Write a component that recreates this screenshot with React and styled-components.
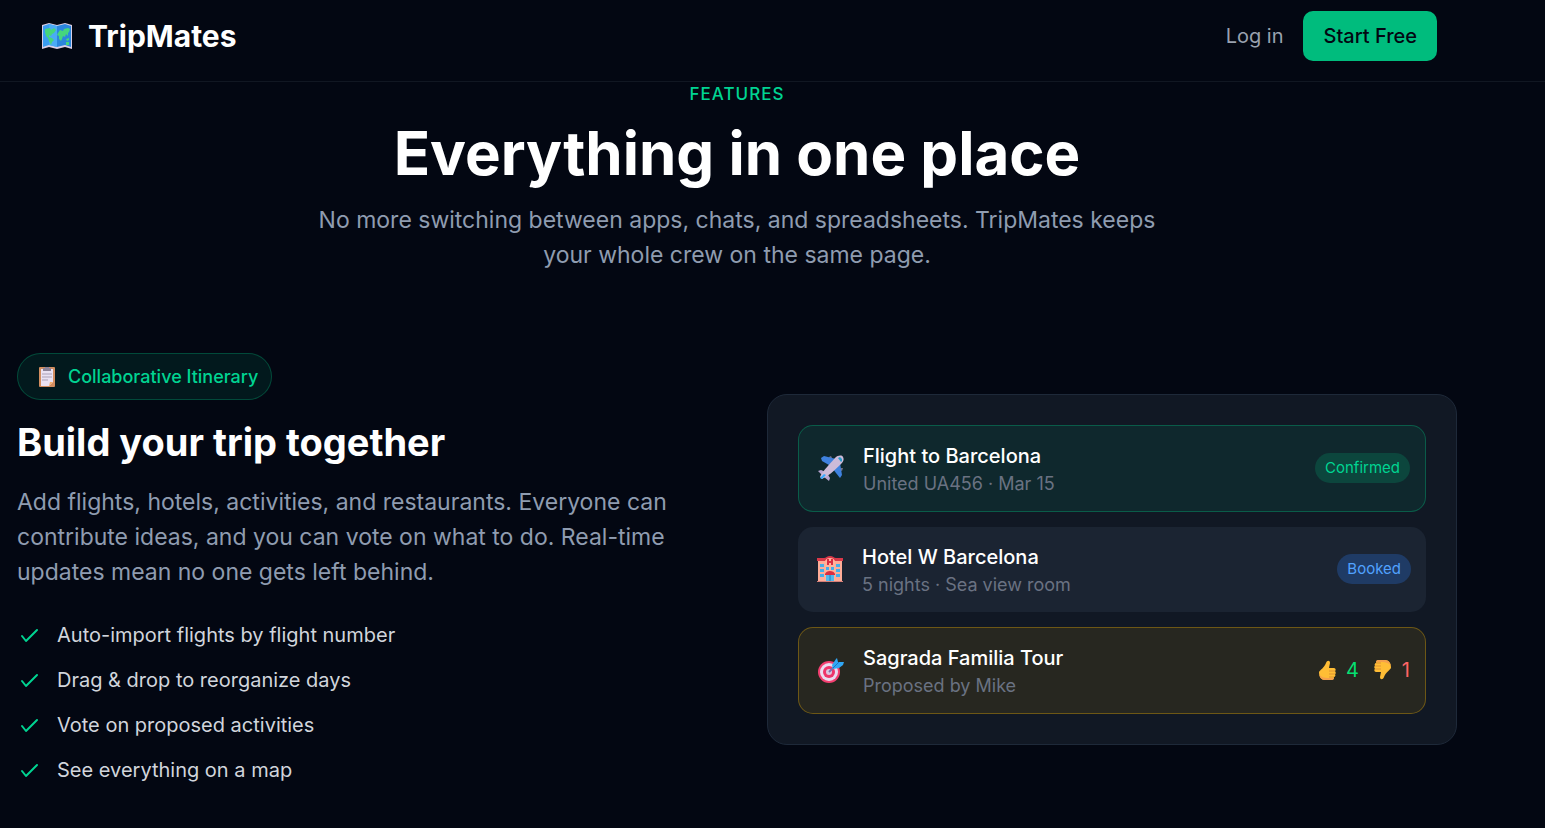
import React from "react";
import styled, { createGlobalStyle } from "styled-components";

const emerald = "#00bc7d";
const mint = "#00d492";
const muted = "#8f9cb0";

const features = [
  "Auto-import flights by flight number",
  "Drag & drop to reorganize days",
  "Vote on proposed activities",
  "See everything on a map",
];

const MapIcon = () => (
  <svg width="32" height="28" viewBox="0 0 32 28" aria-hidden="true">
    <path d="M1 3 8 1l8 2 8-2 7 2v24l-7-2-8 2-8-2-7 2z" fill="#d9cfe6" />
    <path d="m2 4 6-2 8 2v21l-8-2-6 2z" fill="#3a9df0" />
    <path d="m16 4 8-2 6 2v21l-6-2-8 2z" fill="#2b86dd" />
    <path d="m8 2 8 2v21l-8-2z" fill="#4aabf5" />
    <path
      d="M4 7l5-1 1 2 3-2 2 2-2 3-2 1-1 2-2-1v2l3 1 2 2-2 2-1 3-2-4-1-3-2-2-1-4zM17 11l2-3 3 1 1-2 4-1 2 1-1 3-1 1v3l-2-2-1 3-2-1-1 3-1 2-2-2v-3l-2-1z"
      fill="#45d67c"
    />
    <path d="M25 17l3-1v2l-2 1zM25 20h3v3h-3z" fill="#45d67c" />
  </svg>
);

const ClipboardIcon = () => (
  <svg width="18" height="22" viewBox="0 0 18 22" aria-hidden="true">
    <rect x="1" y="1" width="16" height="20" rx="1" fill="#d18d5f" />
    <path d="M3 3h12v13l-4 4H3z" fill="#e9e2f3" />
    <path d="m11 20 1-4h3z" fill="#f5b06d" />
    <path d="M5 2h2V1h4v1h2v3H5z" fill="#8b8296" />
    <path d="M4 8h10M4 11h10M4 14h6" stroke="#aaa1b7" />
  </svg>
);

const PlaneIcon = () => (
  <svg width="28" height="28" viewBox="0 0 28 28" aria-hidden="true">
    <path d="M12 3l2-1 1 2-2 2zM24 14l2 0-1 3-2-1z" fill="#77738a" />
    <path d="M4 4l3-2 12 3-7 6-7-4z" fill="#3f82df" />
    <path d="M23 9l2 12-2 3-4-5-3-4z" fill="#3f82df" />
    <path d="M1 17l3-1 5 2-4 3zM7 23l3-4 3 5-1 3z" fill="#b9a5d2" />
    <path
      d="M3 23c2-5 7-10 15-19 3-3 7-3 8-1s1 4-2 7C16 18 11 22 5 25z"
      fill="#cdbbd9"
    />
    <path d="M21 4l2-1 2 2v2l-1 1z" fill="#2a9bc9" />
    <path d="m3 24 4-4 2 1-4 4z" fill="#38a8ff" />
  </svg>
);

const HotelIcon = () => (
  <svg width="26" height="26" viewBox="0 0 26 26" aria-hidden="true">
    <path d="M1 4h24v21H1z" fill="#ffad98" />
    <path d="M8 4c1-4 9-4 10 0v21H8z" fill="#ffb49b" />
    <path
      d="M0 2h7c2 0 3-2 6-2s4 2 6 2h7v3h-8c-1-2-2-3-5-3S9 3 8 5H0z"
      fill="#da3849"
    />
    <path d="M11 3v6M15 3v6M11 6h4" stroke="#d92e43" strokeWidth="2" />
    <path
      d="M3 8h4v3H3zM3 13h4v3H3zM3 18h4v3H3zM19 8h4v3h-4zM19 13h4v3h-4zM19 18h4v3h-4zM9 11h3v3H9zM14 11h3v3h-3z"
      fill="#45aee9"
    />
    <path d="M8 18c1-4 9-4 10 0v1H8z" fill="#d92e43" />
    <path d="M9 19h8v6H9z" fill="#52b9ec" />
    <path d="M13 19v6" stroke="#2a79b8" />
    <path d="M0 25h26v1H0z" fill="#d68079" />
  </svg>
);

const TargetIcon = () => (
  <svg width="28" height="28" viewBox="0 0 28 28" aria-hidden="true">
    <circle cx="12" cy="16" r="11" fill="#f33f70" />
    <circle cx="12" cy="16" r="9" fill="#eadcf0" />
    <circle cx="12" cy="16" r="6" fill="#ee356a" />
    <circle cx="12" cy="16" r="3" fill="#dbc6df" />
    <path d="m12 16 6-6" stroke="#7c6fae" strokeWidth="2" />
    <path d="m15 9 4-6 1-1 1 4 6 0-1 3-4 3-6 1z" fill="#30a6f4" />
    <path d="m16 12 6-6" stroke="#1776c5" />
  </svg>
);

const ThumbIcon = ({ down }) => (
  <svg width="20" height="22" viewBox="0 0 20 22" aria-hidden="true">
    <g transform={down ? "rotate(180 10 11)" : undefined}>
      <path
        d="M2 13c1-2 5-4 7-9 1-3 4-3 4 0l-1 5h5c2 0 2 3 1 3 1 1 1 3 0 3 1 1 0 3-1 3 0 2-1 3-3 3H8c-4 0-6-3-6-8z"
        fill="#ffbd35"
      />
      <path d="M2 15c2 3 5 4 9 4h6c0 2-2 2-3 2H8c-3 0-5-2-6-6z" fill="#f5a04d" />
      <path d="M12 12h6M12 15h6M12 18h5" stroke="#df9335" />
    </g>
  </svg>
);

const CheckIcon = () => (
  <svg width="25" height="25" viewBox="0 0 25 25" fill="none" aria-hidden="true">
    <path
      d="m5 13 4 5L20 7"
      stroke={mint}
      strokeWidth="2"
      strokeLinecap="round"
      strokeLinejoin="round"
    />
  </svg>
);

const App = () => {
  return (
    <>
      <GlobalStyle />
      <Header>
        <HeaderInner>
          <Brand href="#">
            <MapIcon />
            TripMates
          </Brand>
          <Nav>
            <LoginLink href="#login">Log in</LoginLink>
            <StartButton type="button">Start Free</StartButton>
          </Nav>
        </HeaderInner>
      </Header>
      <Main>
        <Intro>
          <Eyebrow>FEATURES</Eyebrow>
          <Headline>Everything in one place</Headline>
          <Lead>
            No more switching between apps, chats, and spreadsheets. TripMates
            keeps your whole crew on the same page.
          </Lead>
        </Intro>
        <Feature>
          <div>
            <Tag>
              <TagIcon>
                <ClipboardIcon />
              </TagIcon>
              Collaborative Itinerary
            </Tag>
            <Title>Build your trip together</Title>
            <Copy>
              Add flights, hotels, activities, and restaurants. Everyone can
              contribute ideas, and you can vote on what to do. Real-time
              updates mean no one gets left behind.
            </Copy>
            <CheckList>
              {features.map((item) => (
                <li key={item}>
                  <CheckIcon />
                  {item}
                </li>
              ))}
            </CheckList>
          </div>
          <Card>
            <Row $bg="rgba(0, 188, 125, 0.1)" $border="rgba(0, 188, 125, 0.35)">
              <RowIcon>
                <PlaneIcon />
              </RowIcon>
              <RowText>
                <h4>Flight to Barcelona</h4>
                <p>United UA456 · Mar 15</p>
              </RowText>
              <Badge $color={mint} $bg="rgba(0, 188, 125, 0.2)">
                Confirmed
              </Badge>
            </Row>
            <Row $bg="#1b2432">
              <RowIcon>
                <HotelIcon />
              </RowIcon>
              <RowText>
                <h4>Hotel W Barcelona</h4>
                <p>5 nights · Sea view room</p>
              </RowText>
              <Badge $color="#51a2ff" $bg="rgba(43, 127, 255, 0.25)">
                Booked
              </Badge>
            </Row>
            <Row $bg="rgba(240, 177, 0, 0.1)" $border="rgba(240, 177, 0, 0.35)">
              <RowIcon>
                <TargetIcon />
              </RowIcon>
              <RowText>
                <h4>Sagrada Familia Tour</h4>
                <p>Proposed by Mike</p>
              </RowText>
              <Votes>
                <Vote $color="#05df72">
                  <ThumbIcon />4
                </Vote>
                <Vote $color="#ff6467">
                  <ThumbIcon down />1
                </Vote>
              </Votes>
            </Row>
          </Card>
        </Feature>
      </Main>
    </>
  );
};

const GlobalStyle = createGlobalStyle`
  * {
    box-sizing: border-box;
    margin: 0;
    padding: 0;
  }
  body {
    background: #030712;
    color: #fff;
    font-family: Inter, "Liberation Sans", sans-serif;
    font-size: 20px;
    line-height: 30px;
  }
  svg {
    display: block;
    flex-shrink: 0;
  }
`;

const Header = styled.header`
  padding: 11px 71px 20px 0;
  border-bottom: 1px solid #111722;
`;

const HeaderInner = styled.div`
  display: flex;
  align-items: center;
  justify-content: space-between;
  max-width: 1440px;
  margin: 0 auto;
  padding: 0 20px;
`;

const Brand = styled.a`
  display: flex;
  align-items: center;
  gap: 15px;
  padding-left: 4px;
  color: #fff;
  font-size: 30px;
  font-weight: 700;
  line-height: 40px;
  text-decoration: none;
`;

const Nav = styled.nav`
  display: flex;
  align-items: center;
  gap: 20px;
`;

const LoginLink = styled.a`
  color: #99a1af;
  text-decoration: none;
`;

const StartButton = styled.button`
  padding: 10px 20px;
  border: 0;
  border-radius: 10px;
  background: ${emerald};
  color: #030712;
  font: inherit;
  font-weight: 500;
  cursor: pointer;
`;

const Main = styled.main`
  padding-right: 71px;
`;

const Intro = styled.section`
  max-width: 840px;
  margin: 0 auto 80px;
  text-align: center;
`;

const Eyebrow = styled.p`
  color: ${mint};
  font-size: 17px;
  font-weight: 500;
  line-height: 25px;
  letter-spacing: 1px;
`;

const Headline = styled.h2`
  margin: 16px 0 20px;
  font-size: 60px;
  font-weight: 700;
  line-height: 60px;
`;

const Lead = styled.p`
  color: ${muted};
  font-size: 23px;
  line-height: 35px;
`;

const Feature = styled.section`
  display: grid;
  grid-template-columns: 1fr 1fr;
  align-items: center;
  gap: 60px;
  max-width: 1440px;
  margin: 0 auto;
`;

const Tag = styled.div`
  display: flex;
  align-items: center;
  gap: 12px;
  width: fit-content;
  padding: 10px 13px 10px 16px;
  border: 1px solid rgba(0, 188, 125, 0.3);
  border-radius: 24px;
  background: rgba(0, 188, 125, 0.1);
  color: ${mint};
  font-size: 18px;
  font-weight: 500;
  line-height: 25px;
`;

const TagIcon = styled.span`
  padding-left: 4px;
`;

const Title = styled.h3`
  margin: 20px 0;
  font-size: 38px;
  font-weight: 700;
  line-height: 45px;
`;

const Copy = styled.p`
  margin-bottom: 30px;
  color: ${muted};
  font-size: 23px;
  line-height: 35px;
`;

const CheckList = styled.ul`
  display: flex;
  flex-direction: column;
  gap: 15px;
  list-style: none;
  li {
    display: flex;
    align-items: center;
    gap: 15px;
    color: #d1d5dc;
  }
`;

const Card = styled.div`
  display: flex;
  flex-direction: column;
  gap: 15px;
  padding: 30px;
  border: 1px solid #1e2939;
  border-radius: 20px;
  background: #111824;
`;

const Row = styled.article`
  display: flex;
  align-items: center;
  gap: 15px;
  padding: 15px;
  border: ${({ $border }) => ($border ? `1px solid ${$border}` : "0")};
  border-radius: 15px;
  background: ${({ $bg }) => $bg};
`;

const RowIcon = styled.span`
  display: flex;
  justify-content: center;
  width: 34px;
`;

const RowText = styled.div`
  flex: 1;
  h4 {
    font-size: 20px;
    font-weight: 500;
    line-height: 30px;
  }
  p {
    color: #6a7282;
    font-size: 18px;
    line-height: 25px;
  }
`;

const Badge = styled.span`
  padding: 5px 10px;
  border-radius: 15px;
  background: ${({ $bg }) => $bg};
  color: ${({ $color }) => $color};
  font-size: 15px;
  line-height: 20px;
`;

const Votes = styled.div`
  display: flex;
  gap: 14px;
`;

const Vote = styled.span`
  display: flex;
  align-items: center;
  gap: 9px;
  color: ${({ $color }) => $color};
`;

export default App;
